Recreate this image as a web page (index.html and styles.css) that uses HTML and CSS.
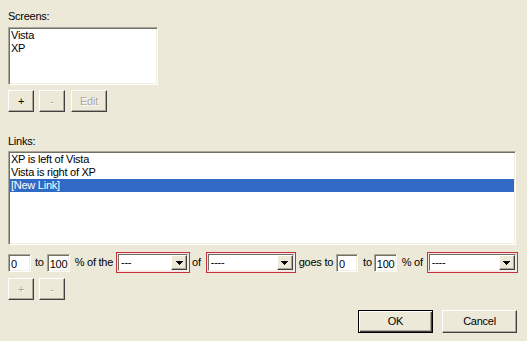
FILE: index.html
```html
<!DOCTYPE html>
<html>
<head>
<meta charset="utf-8">
<link rel="stylesheet" href="styles.css">
</head>
<body>
<div class="dlg">
  <div class="label">Screens:</div>
  <div class="listbox screens">
    <div class="item">Vista</div>
    <div class="item">XP</div>
  </div>
  <div class="btnrow">
    <button class="btn sq">+</button>
    <button class="btn sq" disabled>-</button>
    <button class="btn edit" disabled>Edit</button>
  </div>
  <div class="label links-label">Links:</div>
  <div class="listbox links">
    <div class="item">XP is left of Vista</div>
    <div class="item">Vista is right of XP</div>
    <div class="item sel">[New Link]</div>
  </div>
  <div class="ctrlrow">
    <span class="field f0">0</span>
    <span class="txt t-to1">to</span>
    <span class="field f100">100</span>
    <span class="txt t-pct1">% of the</span>
    <div class="combo-wrap c1"><div class="combo"><span class="ctext">---</span><span class="arrow"><svg width="7" height="4" viewBox="0 0 7 4"><path d="M0 0h7v1h-1v1h-1v1h-1v1h-1v-1h-1v-1h-1v-1h-1z" fill="#000"/></svg></span></div></div>
    <span class="txt t-of">of</span>
    <div class="combo-wrap c2"><div class="combo"><span class="ctext">----</span><span class="arrow"><svg width="7" height="4" viewBox="0 0 7 4"><path d="M0 0h7v1h-1v1h-1v1h-1v1h-1v-1h-1v-1h-1v-1h-1z" fill="#000"/></svg></span></div></div>
    <span class="txt t-goes">goes to</span>
    <span class="field f0b">0</span>
    <span class="txt t-to2">to</span>
    <span class="field f100b">100</span>
    <span class="txt t-pct2">% of</span>
    <div class="combo-wrap c3"><div class="combo"><span class="ctext">----</span><span class="arrow"><svg width="7" height="4" viewBox="0 0 7 4"><path d="M0 0h7v1h-1v1h-1v1h-1v1h-1v-1h-1v-1h-1v-1h-1z" fill="#000"/></svg></span></div></div>
  </div>
  <div class="btnrow row2">
    <button class="btn sq" disabled>+</button>
    <button class="btn sq" disabled>-</button>
  </div>
  <div class="footer">
    <button class="btn dlgbtn default">OK</button>
    <button class="btn dlgbtn">Cancel</button>
  </div>
</div>
</body>
</html>
```
FILE: styles.css
```css
html, body {
  margin: 0;
  background: #ECE9D8;
}
body {
  font: 11px/13px "Liberation Sans", Arial, sans-serif;
  letter-spacing: -0.25px;
  color: #000;
  width: 527px;
  height: 341px;
  overflow: hidden;
}
.dlg {
  display: flex;
  flex-direction: column;
  align-items: flex-start;
  padding: 10px 0 0 8px;
}
.label {
  height: 13px;
}
.listbox {
  box-sizing: border-box;
  background: #fff;
  border: 1px solid;
  border-color: #ACA899 #fff #fff #ACA899;
  box-shadow: inset 1px 1px #716F64, inset -1px -1px #F1EFE2;
  padding: 1px;
}
.item {
  height: 13px;
  line-height: 13px;
  padding-left: 1px;
  white-space: nowrap;
}
.item.sel {
  background: #316AC5;
  color: #fff;
}
.screens {
  margin-top: 4px;
  width: 150px;
  height: 58px;
}
.btnrow {
  display: flex;
  margin-top: 5px;
}
.btn {
  box-sizing: border-box;
  height: 22px;
  padding: 0;
  margin: 0;
  background: #ECE9D8;
  border: 1px solid;
  border-color: #fff #404040 #404040 #fff;
  box-shadow: inset -1px -1px #ACA899;
  font: 11px/13px "Liberation Sans", Arial, sans-serif;
  letter-spacing: -0.25px;
  color: #000;
}
.btn:disabled {
  color: #ACA899;
  text-shadow: 1px 1px #fff;
}
.btn.sq {
  width: 26px;
  margin-right: 5px;
}
.btn.edit {
  width: 36px;
  margin-left: 1px;
}
.links-label {
  margin-top: 23px;
}
.links {
  margin-top: 3px;
  width: 508px;
  height: 94px;
}
.ctrlrow {
  display: flex;
  align-items: center;
  height: 21px;
  margin-top: 7px;
  white-space: nowrap;
}
.field {
  box-sizing: border-box;
  height: 18px;
  width: 23px;
  background: #fff;
  border: 1px solid;
  border-color: #ACA899 #fff #fff #ACA899;
  box-shadow: inset 1px 1px #716F64, inset -1px -1px #F1EFE2;
  padding: 2px 0 0 2px;
  line-height: 14px;
  font-size: 11px;
}
.txt {
  line-height: 13px;
}
.t-to1 { margin-left: 4px; }
.f100 { margin-left: 3px; }
.t-pct1 { margin-left: 5px; }
.c1 { margin-left: 3px; width: 74px; }
.t-of { margin-left: 2px; }
.c2 { margin-left: 5px; width: 90px; }
.t-goes { margin-left: 3px; }
.f0b { margin-left: 3px; width: 22px; }
.t-to2 { margin-left: 5px; }
.f100b { margin-left: 2px; }
.t-pct2 { margin-left: 5px; }
.c3 { margin-left: 4px; width: 91px; }
.combo-wrap {
  box-sizing: border-box;
  height: 21px;
  border: 1px solid #C5303A;
  padding: 1px;
  background: #F6E6E6;
}
.combo {
  box-sizing: border-box;
  height: 100%;
  background: #fff;
  border: 1px solid;
  border-color: #716F64 #F1EFE2 #F1EFE2 #716F64;
  display: flex;
  align-items: center;
  justify-content: space-between;
}
.ctext {
  padding-left: 2px;
  line-height: 13px;
}
.arrow {
  box-sizing: border-box;
  width: 16px;
  height: 15px;
  background: #ECE9D8;
  border: 1px solid;
  border-color: #fff #404040 #404040 #fff;
  box-shadow: inset -1px -1px #ACA899;
  display: flex;
  align-items: center;
  justify-content: center;
}
.arrow svg {
  display: block;
}
.row2 {
  margin-top: 5px;
}
.footer {
  display: flex;
  justify-content: flex-end;
  gap: 9px;
  width: 509px;
  margin-top: 10px;
}
.btn.dlgbtn {
  width: 75px;
  height: 23px;
}
.btn.default {
  border: 1px solid #000;
  box-shadow: inset 1px 1px #fff, inset -1px -1px #404040, inset -2px -2px #ACA899;
}
```
